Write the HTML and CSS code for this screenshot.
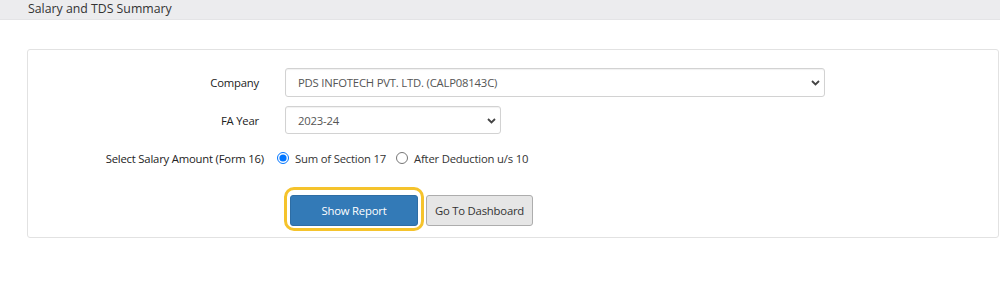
FILE: index.html
```html
<!DOCTYPE html>
<html>
<head>
<meta charset="utf-8">
<link rel="stylesheet" href="styles.css">
</head>
<body>
<div class="page-header">Salary and TDS Summary</div>
<div class="card">
  <div class="row">
    <label class="lbl">Company</label>
    <div class="select-wrap wide">
      <select class="sel"><option>PDS INFOTECH PVT. LTD. (CALP08143C)</option></select>
      <svg class="chev" width="9" height="6" viewBox="0 0 9 6"><path d="M1 1 L4.5 4.5 L8 1" fill="none" stroke="#444" stroke-width="1.8"/></svg>
    </div>
  </div>
  <div class="row">
    <label class="lbl">FA Year</label>
    <div class="select-wrap narrow">
      <select class="sel"><option>2023-24</option></select>
      <svg class="chev" width="9" height="6" viewBox="0 0 9 6"><path d="M1 1 L4.5 4.5 L8 1" fill="none" stroke="#444" stroke-width="1.8"/></svg>
    </div>
  </div>
  <div class="row radio-row">
    <label class="lbl lbl-long">Select Salary Amount (Form 16)</label>
    <div class="radios">
      <label class="opt"><input type="radio" name="amt" checked> Sum of Section 17</label>
      <label class="opt"><input type="radio" name="amt"> After Deduction u/s 10</label>
    </div>
  </div>
  <div class="row btn-row">
    <div class="lbl"></div>
    <div class="btns">
      <button class="btn btn-primary">Show Report</button>
      <button class="btn btn-default">Go To Dashboard</button>
    </div>
  </div>
</div>
</body>
</html>
```
FILE: styles.css
```css
* { box-sizing: border-box; }
body {
  margin: 0;
  font-family: "Open Sans", "Noto Sans", sans-serif;
  font-size: 11.3px;
  color: #333;
  background: #fff;
}
.page-header {
  height: 20px;
  background: #ececee;
  border-bottom: 1px solid #e4e4e6;
  padding-left: 28px;
  font-size: 12.3px;
  line-height: 18px;
  color: #333;
}
.card {
  margin: 29px 1px 0 27px;
  height: 189px;
  border: 1px solid #e2e2e2;
  border-radius: 3px;
  padding-top: 18px;
}
.row {
  display: flex;
  align-items: center;
  margin-bottom: 9px;
}
.lbl {
  width: 231px;
  flex: none;
  text-align: right;
  color: #222;
  margin-right: 26px;
  letter-spacing: -0.2px;
}
.lbl-long {
  margin-right: 13px;
  width: 236px;
}
.select-wrap {
  position: relative;
  height: 29px;
}
.select-wrap.wide { width: 540px; }
.select-wrap.narrow { width: 216px; height: 28px; }
.sel {
  appearance: none;
  -webkit-appearance: none;
  width: 100%;
  height: 100%;
  border: 1px solid #d2d2d2;
  border-radius: 3px;
  background: #fff;
  box-shadow: inset 0 1px 1px rgba(0,0,0,0.06);
  padding: 0 12px;
  font-family: inherit;
  font-size: 11.3px;
  color: #555;
  letter-spacing: -0.2px;
}
.chev {
  position: absolute;
  right: 5px;
  top: 12px;
}
.radio-row {
  margin-top: 12px;
  height: 24px;
}
.radios {
  display: flex;
  align-items: center;
  gap: 10px;
}
.opt {
  display: flex;
  align-items: center;
  color: #333;
  letter-spacing: -0.2px;
}
.opt input {
  margin: 0 6px 0 0;
  width: 12px;
  height: 12px;
  accent-color: #0075ff;
}
.btn-row {
  margin-top: 25px;
}
.btns {
  display: flex;
  gap: 8px;
  margin-left: 5px;
}
.btn {
  height: 31px;
  border-radius: 3px;
  font-family: inherit;
  font-size: 11.3px;
  letter-spacing: -0.2px;
  white-space: nowrap;
  padding: 0;
}
.btn-primary {
  position: relative;
  width: 128px;
  background: #337ab7;
  border: 1px solid #2e6da4;
  color: #fff;
}
.btn-primary::after {
  content: "";
  position: absolute;
  left: -7px;
  right: -7px;
  top: -9px;
  bottom: -6px;
  border: 3px solid #f5c32c;
  border-radius: 10px;
}
.btn-default {
  width: 107px;
  background: #e6e6e6;
  border: 1px solid #adadad;
  color: #333;
}
```
